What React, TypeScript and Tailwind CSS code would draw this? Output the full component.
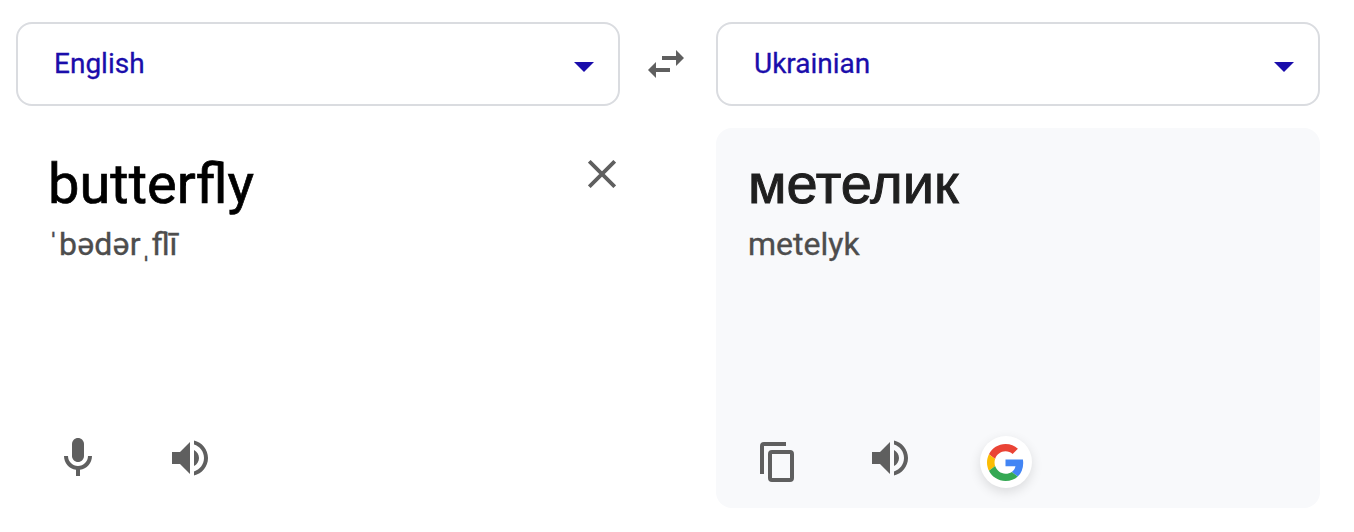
import type { ReactNode } from "react";

function Icon({ children, className = "" }: { children: ReactNode; className?: string }) {
  return (
    <svg viewBox="0 0 24 24" className={`block size-12 shrink-0 fill-[#5f5f5f] ${className}`} aria-hidden="true">
      {children}
    </svg>
  );
}

function SpeakerIcon() {
  return (
    <Icon>
      <path d="M3 9v6h4l5 5V4L7 9H3zm13.5 3c0-1.77-1.02-3.29-2.5-4.03v8.05c1.48-.73 2.5-2.25 2.5-4.02zM14 3.23v2.06c2.89.86 5 3.54 5 6.71s-2.11 5.85-5 6.71v2.06c4.01-.91 7-4.49 7-8.77s-2.99-7.86-7-8.77z" />
    </Icon>
  );
}

function GoogleIcon() {
  return (
    <svg viewBox="0 0 48 48" className="block size-[37px]" aria-hidden="true">
      <path fill="#EA4335" d="M24 9.5c3.54 0 6.71 1.22 9.21 3.6l6.85-6.85C35.9 2.38 30.47 0 24 0 14.62 0 6.51 5.38 2.56 13.22l7.98 6.19C12.43 13.72 17.74 9.5 24 9.5z" />
      <path fill="#4285F4" d="M46.98 24.55c0-1.57-.15-3.09-.38-4.55H24v9.02h12.94c-.58 2.96-2.26 5.48-4.78 7.18l7.73 6c4.51-4.18 7.09-10.36 7.09-17.65z" />
      <path fill="#FBBC05" d="M10.53 28.59c-.48-1.45-.76-2.99-.76-4.59s.27-3.14.76-4.59l-7.98-6.19C.92 16.46 0 20.12 0 24c0 3.88.92 7.54 2.56 10.78l7.97-6.19z" />
      <path fill="#34A853" d="M24 48c6.48 0 11.93-2.13 15.89-5.81l-7.73-6c-2.15 1.45-4.92 2.3-8.16 2.3-6.26 0-11.57-4.22-13.47-9.91l-7.98 6.19C6.51 42.62 14.62 48 24 48z" />
    </svg>
  );
}

function LanguageSelect({ label }: { label: string }) {
  return (
    <button className="flex h-[84px] w-[604px] items-center justify-between rounded-2xl border-2 border-[#dadce0] pr-6 pl-9 text-[28px] leading-8 text-[#1a0dab]">
      <span className="[-webkit-text-stroke:0.3px_currentColor]">{label}</span>
      <svg viewBox="0 0 20 10" className="mt-1.5 h-2.5 w-5 fill-[#1a0dab]" aria-hidden="true">
        <path d="M0 0h20L10 10z" />
      </svg>
    </button>
  );
}

export default function App() {
  return (
    <main className="h-[532px] w-[1354px] overflow-hidden bg-white px-4 pt-[22px] font-['Roboto','Liberation_Sans',sans-serif]">
      <div className="flex items-center">
        <LanguageSelect label="English" />
        <button className="flex w-24 justify-center pr-1" aria-label="Swap languages">
          <Icon>
            <path d="M6.99 11L3 15l3.99 4v-3H14v-2H6.99v-3zM21 9l-3.99-4v3H10v2h7.01v3L21 9z" />
          </Icon>
        </button>
        <LanguageSelect label="Ukrainian" />
      </div>

      <div className="mt-[22px] flex gap-24">
        <section className="flex h-[380px] w-[604px] flex-col justify-between pt-6 pl-8">
          <div className="flex items-start justify-between">
            <div>
              <p className="text-[56px] leading-[64px] text-black [-webkit-text-stroke:0.7px_currentColor]">butterfly</p>
              <p className="mt-2 text-[32px] leading-10 text-[#4d4d4d] [-webkit-text-stroke:0.35px_currentColor]">
                <span className="tracking-[0.25px]">ˈbədər</span>ˌflī
              </p>
            </div>
            <button className="mt-2 mr-1" aria-label="Clear">
              <svg viewBox="0 0 28 28" className="block size-7 stroke-[#5f5f5f]" aria-hidden="true">
                <path d="M1.3 1.3L26.7 26.7M26.7 1.3L1.3 26.7" strokeWidth="3.8" fill="none" />
              </svg>
            </button>
          </div>
          <div className="flex gap-16 pb-[26px] pl-1.5">
            <Icon>
              <path d="M12 14c1.66 0 3-1.34 3-3V5c0-1.66-1.34-3-3-3S9 3.34 9 5v6c0 1.66 1.34 3 3 3z" />
              <path d="M17 11c0 2.76-2.24 5-5 5s-5-2.24-5-5H5c0 3.53 2.61 6.43 6 6.92V21h2v-3.08c3.39-.49 6-3.39 6-6.92h-2z" />
            </Icon>
            <SpeakerIcon />
          </div>
        </section>

        <section className="flex h-[380px] w-[604px] flex-col justify-between rounded-2xl bg-[#f8f9fb] pt-6 pl-8">
          <div>
            <p lang="uk" className="font-['Liberation_Sans',sans-serif] text-[56px] leading-[64px] text-[#1f1f1f] [-webkit-text-stroke:1px_currentColor]">метелик</p>
            <p className="mt-2 text-[32px] leading-10 text-[#4d4d4d] [-webkit-text-stroke:0.35px_currentColor]">metelyk</p>
          </div>
          <div className="flex items-start pb-5 pl-3">
            <svg viewBox="0 0 34 40" className="mt-2 mr-[72px] block h-10 w-[34px] fill-none stroke-[#5f5f5f]" strokeWidth="4" aria-hidden="true">
              <path d="M2 32V4Q2 2 4 2H26" />
              <rect x="10" y="10" width="22" height="28" rx="2" />
            </svg>
            <SpeakerIcon />
            <button className="mt-0.5 ml-[66px] flex size-[52px] items-center justify-center rounded-full bg-white pr-px shadow-[0_4px_12px_rgba(0,0,0,0.12)]" aria-label="Open in Google Translate">
              <GoogleIcon />
            </button>
          </div>
        </section>
      </div>
    </main>
  );
}
